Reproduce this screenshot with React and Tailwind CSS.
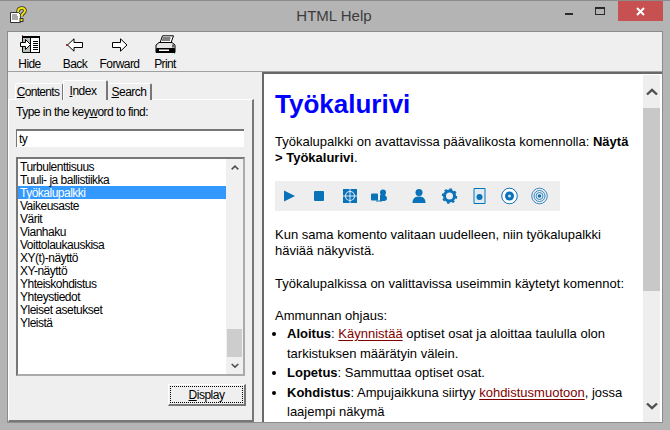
const indexItems = [
  "Turbulenttisuus",
  "Tuuli- ja ballistiikka",
  "Työkalupalkki",
  "Vaikeusaste",
  "Värit",
  "Vianhaku",
  "Voittolaukauskisa",
  "XY(t)-näyttö",
  "XY-näyttö",
  "Yhteiskohdistus",
  "Yhteystiedot",
  "Yleiset asetukset",
  "Yleistä",
];

const HelpIcon = () => (
  <svg width="18" height="18" viewBox="0 0 18 18">
    <path d="M1.500 6.500h8l2 2v8h-10z" fill="#fff" stroke="#333" />
    <path d="M3 9h5M3 11h6M3 13h6" stroke="#555" />
    <path d="M9 6c0-5 7-5 7-1.500 0 3-3.500 2.500-3.500 6" fill="none" stroke="#333" strokeWidth="3.600" />
    <path d="M9 6c0-5 7-5 7-1.500 0 3-3.500 2.500-3.500 6" fill="none" stroke="#f5e400" strokeWidth="2" />
    <rect x="11" y="12.500" width="3" height="3" fill="#f5e400" stroke="#333" />
  </svg>
);

const HideIcon = () => (
  <svg width="22" height="20" viewBox="0 0 22 20" shapeRendering="crispEdges">
    <rect x="3.500" y="1.500" width="17" height="16" fill="#fff" stroke="#000" />
    <rect x="3.500" y="1.500" width="8" height="16" fill="#bcbcbc" stroke="#000" />
    <path d="M3 1h18v2H3z" fill="#000" />
    <path d="M14 6h5M14 8h5M14 10h5M14 12h5M14 14h5" stroke="#000" />
    <path d="M1.500 7.500h5v-3l5 5-5 5v-3h-5z" fill="#fff" stroke="#000" shapeRendering="auto" />
    <rect x="3" y="0" width="1" height="1" fill="#d33" />
    <rect x="3" y="17" width="1" height="1" fill="#2c2" />
  </svg>
);

const BackIcon = () => (
  <svg width="18" height="14" viewBox="0 0 18 14">
    <path d="M1.500 7 8 .8v3.700h8.500v5H8v3.700z" fill="#fff" stroke="#000" />
    <rect x="0" y="6" width="2" height="2" fill="#a33" />
  </svg>
);

const ForwardIcon = () => (
  <svg width="16" height="14" viewBox="0 0 16 14">
    <path d="M15 7 8.500.8v3.700h-8v5h8v3.700z" fill="#fff" stroke="#000" />
  </svg>
);

const PrintIcon = () => (
  <svg width="21" height="20" viewBox="0 0 21 20">
    <path d="M7.500 .8h11l-2.500 7H5z" fill="#fff" stroke="#000" />
    <path d="M7.500 3h8M7 5h8" stroke="#000" />
    <path d="M4 7.500h13l3 2.500v7.500H1V10z" fill="#e4e4e4" stroke="#000" />
    <rect x="1" y="13" width="19" height="4.500" rx="1" fill="#000" />
    <rect x="4" y="14.500" width="10" height="1.500" fill="#fff" />
    <path d="M17 9.500h2v3h-2z" fill="#666" />
    <rect x="19" y="18" width="1" height="1" fill="#2cc" />
  </svg>
);

const ToolButton = ({ icon, label, width }) => (
  <div className={`flex flex-col items-center ${width}`}>
    <div className="flex h-[20px] items-center justify-center">{icon}</div>
    <span className="mt-[2px] text-[12px] leading-[14px] tracking-[-0.6px] text-black">{label}</span>
  </div>
);

const ArrowUp = ({ size = "w-[12px]" }) => (
  <svg className={size} viewBox="0 0 12 8">
    <path d="M1 6.500 6 1.800l5 4.700" fill="none" stroke="#505050" strokeWidth="2.400" />
  </svg>
);

const ArrowDown = ({ size = "w-[12px]" }) => (
  <svg className={size} viewBox="0 0 12 8">
    <path d="M1 1.500 6 6.200l5-4.700" fill="none" stroke="#505050" strokeWidth="2.400" />
  </svg>
);

// icon strip shown inside the help page
const PageIcons = () => (
  <div className="flex h-[30px] w-[285px] items-center bg-[#eeeeee] pl-[9px]">
    <svg width="272" height="20" viewBox="0 0 272 20">
      <path d="M0 4.500 11 10 0 15.500z" fill="#0a72b8" />
      <rect x="30" y="5" width="10" height="10" rx="1" fill="#0a72b8" />
      <rect x="59" y="3" width="14" height="14" fill="#0a72b8" />
      <circle cx="66" cy="10" r="4.500" fill="none" stroke="#d8e8f4" strokeWidth="1.200" />
      <path d="M66 2v16M58 10h16" stroke="#d8e8f4" />
      <circle cx="99" cy="6.500" r="3" fill="#0a72b8" />
      <path d="M96 9c4-1 7 0 7 3.500 0 2-2 2.500-4 2.500h-3z" fill="#0a72b8" />
      <rect x="87" y="7.500" width="7" height="7" rx="1" fill="#0a72b8" />
      <path d="M92 15h6" stroke="#0a72b8" />
      <circle cx="135" cy="6.500" r="3.500" fill="#0a72b8" />
      <path d="M128.500 17c0-4.500 2.500-6.500 6.500-6.500s6.500 2 6.500 6.500z" fill="#0a72b8" />
      <circle cx="165.500" cy="10" r="5" fill="none" stroke="#0a72b8" strokeWidth="3" />
      <circle cx="165.500" cy="10" r="6.800" fill="none" stroke="#0a72b8" strokeWidth="1.800" strokeDasharray="2.600 2.700" />
      <path d="M190 2.500h11v15h-11z" fill="#dfeaf3" stroke="#0a72b8" />
      <circle cx="195.500" cy="11" r="3" fill="#0a72b8" />
      <circle cx="225.500" cy="10" r="7.800" fill="#fff" stroke="#0a72b8" />
      <circle cx="225.500" cy="10" r="4.500" fill="#0a72b8" />
      <circle cx="225.500" cy="10" r="1.500" fill="#cfe2f0" />
      <circle cx="255.500" cy="10" r="7.800" fill="none" stroke="#0a72b8" strokeWidth=".8" />
      <circle cx="255.500" cy="10" r="5.500" fill="none" stroke="#0a72b8" strokeWidth=".8" />
      <circle cx="255.500" cy="10" r="3.500" fill="none" stroke="#0a72b8" strokeWidth=".8" />
      <circle cx="255.500" cy="10" r="1.800" fill="#0a72b8" />
    </svg>
  </div>
);

const ContentLink = ({ children }) => (
  <span className="text-[#800000] underline underline-offset-2">{children}</span>
);

export default function App() {
  return (
    <div className="flex h-[430px] w-[670px] flex-col overflow-hidden border-t border-[#8c8c8c] bg-[#b4b4b4] font-['Liberation_Sans',Arial,sans-serif] text-black">
      {/* Title bar */}
      <div className="flex h-[30px] shrink-0 items-start">
        <div className="mt-[5px] ml-[9px] w-[18px]">
          <HelpIcon />
        </div>
        <div className="flex-1 pt-[6px] pl-[88px] text-center text-[15px] leading-[18px] text-[#3c3c3c]">HTML Help</div>
        <div className="flex h-[20px] items-start">
          <div className="flex h-[20px] w-[32px] justify-center pt-[12px]">
            <div className="h-[2px] w-[8px] bg-[#2a2a2a]" />
          </div>
          <div className="flex h-[20px] w-[30px] justify-center pt-[6px]">
            <div className="h-[8px] w-[10px] border border-t-[2px] border-[#2a2a2a]" />
          </div>
          <div className="mr-[7px] ml-[3px] flex h-[20px] w-[45px] items-center justify-center bg-[#c75050]">
            <svg width="9" height="9" viewBox="0 0 9 9">
              <path d="M1 1l7 7M8 1 1 8" stroke="#fff" strokeWidth="2" />
            </svg>
          </div>
        </div>
      </div>

      {/* Client area */}
      <div className="mx-[7px] mb-[7px] flex min-h-0 flex-1 flex-col border border-[#8c8c8c]">
        {/* Toolbar */}
        <div className="flex h-[40px] shrink-0 items-start border-b border-[#a0a0a0] bg-[#efefef] pt-[3px]">
          <ToolButton icon={<HideIcon />} label="Hide" width="w-[43px]" />
          <ToolButton icon={<BackIcon />} label="Back" width="w-[46px] ml-[1px]" />
          <ToolButton icon={<ForwardIcon />} label="Forward" width="w-[43px]" />
          <ToolButton icon={<PrintIcon />} label="Print" width="w-[48px]" />
        </div>

        <div className="flex min-h-0 flex-1 bg-[#efefef]">
          {/* Left pane */}
          <div className="flex w-[246px] shrink-0 flex-col pt-[8px]">
            <div className="relative z-10 flex h-[19px] items-end pl-[7px] text-[12px] tracking-[-0.5px]">
              <div className="mb-[-1px] flex h-[17px] w-[48px] items-center justify-center rounded-t-[2px] border-t border-r border-l border-white border-r-[#777] bg-[#efefef] pr-[2px] pb-[1px] tracking-[-0.7px]">
                <span><u>C</u>ontents</span>
              </div>
              <div className="mb-[-1px] flex h-[20px] w-[45px] items-start justify-center rounded-t-[2px] border-t border-r-2 border-l border-white border-r-[#777] bg-[#efefef] pt-[1px] pr-[4px]">
                <span><u>I</u>ndex</span>
              </div>
              <div className="mb-[-1px] flex h-[17px] w-[44px] items-center justify-center rounded-t-[2px] border-t border-r-2 border-white border-r-[#777] bg-[#efefef] pb-[1px]">
                <span><u>S</u>earch</span>
              </div>
            </div>
            <div className="flex min-h-0 flex-1 flex-col border-t border-r-2 border-b-2 border-l border-white border-r-[#777] border-b-[#777] px-[7px] pt-[4px] text-[12px] tracking-[-0.5px]">
              <div className="leading-[16px]">Type in the key<u>w</u>ord to find:</div>
              <div className="mt-[9px] h-[18px] w-[228px] border-t-2 border-l border-[#777] bg-white pl-[2px] leading-[16px]">ty</div>
              <div className="mt-[10px] flex h-[219px] w-[229px] border-2 border-[#777] border-r-[#aaa] border-b-[#aaa] bg-white">
                <div className="flex-1 pt-[1px] leading-[15px]">
                  {indexItems.map((item) => (
                    <div
                      key={item}
                      className={item === "Työkalupalkki" ? "h-[13px] bg-[#3399ff] pl-[2px] text-white" : "h-[13px] pl-[2px]"}
                    >
                      {item}
                    </div>
                  ))}
                </div>
                <div className="flex w-[17px] flex-col items-center bg-[#f0f0f0]">
                  <div className="flex h-[17px] items-center justify-center">
                    <ArrowUp size="w-[8px]" />
                  </div>
                  <div className="flex-1" />
                  <div className="h-[28px] w-[15px] bg-[#cdcdcd]" />
                  <div className="flex h-[17px] items-center justify-center">
                    <ArrowDown size="w-[8px]" />
                  </div>
                </div>
              </div>
              <div className="mt-[8px] flex justify-end">
                <div className="mr-[-1px] h-[22px] w-[78px] border-t border-r-2 border-b-2 border-l border-t-white border-r-[#777] border-b-[#777] border-l-white p-[1px]">
                  <div className="flex h-full items-center justify-center border border-dotted border-black">
                    <span><u>D</u>isplay</span>
                  </div>
                </div>
              </div>
            </div>
          </div>

          {/* Splitter */}
          <div className="w-[8px] shrink-0 bg-[#efefef]" />

          {/* Help page */}
          <div className="flex min-w-0 flex-1 border-t-2 border-l-2 border-[#696969] bg-white">
            <div className="min-w-0 flex-1 overflow-hidden pt-[15px] pl-[11px] text-[13px] leading-[16px]">
              <h1 className="text-[26px] leading-[30px] font-bold text-[#0000ff]">Työkalurivi</h1>
              <p className="mt-[15px]">
                Työkalupalkki on avattavissa päävalikosta komennolla: <b>Näytä<br />&gt; Työkalurivi</b>.
              </p>
              <div className="mt-[15px]">
                <PageIcons />
              </div>
              <p className="mt-[16px]">
                Kun sama komento valitaan uudelleen, niin työkalupalkki<br />häviää näkyvistä.
              </p>
              <p className="mt-[17px]">Työkalupalkissa on valittavissa useimmin käytetyt komennot:</p>
              <p className="mt-[16px]">Ammunnan ohjaus:</p>
              <ul className="list-disc pl-[12px] leading-[19.500px] whitespace-nowrap">
                <li><b>Aloitus</b>: <ContentLink>Käynnistää</ContentLink> optiset osat ja aloittaa taululla olon<br />tarkistuksen määrätyin välein.</li>
                <li><b>Lopetus</b>: Sammuttaa optiset osat.</li>
                <li><b>Kohdistus</b>: Ampujaikkuna siirtyy <ContentLink>kohdistusmuotoon</ContentLink>, jossa<br />laajempi näkymä</li>
              </ul>
            </div>
            <div className="mt-[1px] mr-[2px] flex w-[17px] shrink-0 flex-col items-center bg-[#eeeeee]">
              <div className="flex h-[33px] items-center justify-center">
                <ArrowUp />
              </div>
              <div className="h-[183px] w-[17px] bg-[#c8c8c8]" />
              <div className="flex-1" />
              <div className="flex h-[32px] items-center justify-center">
                <ArrowDown />
              </div>
            </div>
          </div>
        </div>
      </div>
    </div>
  );
}
